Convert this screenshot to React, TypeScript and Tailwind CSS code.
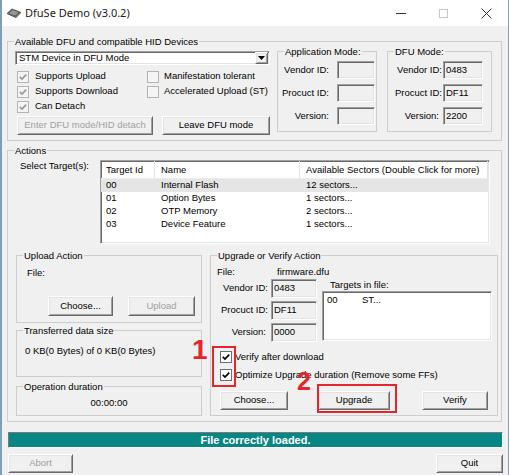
import React from "react";

const raised =
  "border border-t-white border-l-white border-r-[#696969] border-b-[#696969] bg-[#f0f0f0] shadow-[inset_1px_1px_0_#e3e3e3,inset_-1px_-1px_0_#a0a0a0]";
const sunken =
  "border border-t-[#a0a0a0] border-l-[#a0a0a0] border-r-white border-b-white shadow-[inset_1px_1px_0_#696969,inset_-1px_-1px_0_#e3e3e3]";

function Btn({
  children,
  disabled,
  className = "",
}: {
  children: React.ReactNode;
  disabled?: boolean;
  className?: string;
}) {
  return (
    <div
      className={`flex items-center justify-center ${raised} ${
        disabled ? "text-[#a0a0a0]" : "text-black"
      } ${className}`}
    >
      {children}
    </div>
  );
}

function Group({
  title,
  className = "",
  children,
}: {
  title: string;
  className?: string;
  children?: React.ReactNode;
}) {
  return (
    <fieldset className={`min-w-0 border border-[#cdcdcd] ${className}`}>
      <legend className="ml-[6px] px-[1px] leading-[13px]">{title}</legend>
      {children}
    </fieldset>
  );
}

function Check({ checked, dim }: { checked?: boolean; dim?: boolean }) {
  return (
    <span
      className={`flex h-[12px] w-[12px] shrink-0 items-center justify-center ${
        dim ? "border border-[#b4b4b4] bg-[#f4f4f4]" : "border border-[#6e6e6e] bg-white"
      }`}
    >
      {checked && (
        <svg width="10" height="10" viewBox="0 0 10 10">
          <polyline
            points="1.8,4.8 4,7 8.2,2.6"
            fill="none"
            stroke={dim ? "#9a9a9a" : "#000"}
            strokeWidth="1.7"
          />
        </svg>
      )}
    </span>
  );
}

function Field({ value = "", className = "" }: { value?: string; className?: string }) {
  return (
    <div className={`flex items-center pl-[2px] ${sunken} ${className}`}>{value}</div>
  );
}

const targets = [
  { id: "00", name: "Internal Flash", sectors: "12 sectors..." },
  { id: "01", name: "Option Bytes", sectors: "1 sectors..." },
  { id: "02", name: "OTP Memory", sectors: "2 sectors..." },
  { id: "03", name: "Device Feature", sectors: "1 sectors..." },
];

export default function App() {
  return (
    <div className="relative flex h-[475px] w-[509px] flex-col overflow-hidden whitespace-nowrap border-l-2 border-r border-[#7b9fbd] bg-[#f0f0f0] font-['Liberation_Sans',Arial,sans-serif] text-[9.5px] text-black">
      {/* title bar */}
      <div className="flex h-[26px] shrink-0 items-center bg-white">
        <svg className="ml-[4px]" width="16" height="12" viewBox="0 0 16 12">
          <path d="M1 6 L6 1.5 L15 5 L10 10 Z" fill="#5c5c5c" />
          <path d="M3 6.2 L6.5 3 L12.5 5.4 L9.3 8.5 Z" fill="#9a9a9a" />
          <path d="M1 6 L10 10 L10 11 L1 7 Z" fill="#3a3a3a" />
          <path d="M10 10 L15 5 L15 6 L10 11 Z" fill="#444" />
        </svg>
        <span className="ml-[3px] font-['Noto_Sans',sans-serif] text-[11px] text-[#1a1a1a]">
          DfuSe Demo (v3.0.2)
        </span>
        <div className="ml-auto flex h-full items-center">
          <div className="flex h-full w-[43px] items-center justify-center">
            <span className="h-px w-[10px] bg-[#333]" />
          </div>
          <div className="flex h-full w-[43px] items-center justify-center">
            <span className="h-[9px] w-[9px] border border-[#c8c8c8]" />
          </div>
          <div className="flex h-full w-[43px] items-center justify-center">
            <svg width="11" height="11" viewBox="0 0 11 11">
              <path d="M0.5 0.5 L10.5 10.5 M10.5 0.5 L0.5 10.5" stroke="#333" strokeWidth="1" />
            </svg>
          </div>
        </div>
      </div>

      <div className="flex flex-col pl-[5px] pr-[6px]">
        {/* devices */}
        <Group title="Available DFU and compatible HID Devices" className="mt-[9px] h-[106px]">
          <div className="flex items-start pl-[7px]">
            <div className="flex w-[255px] flex-col">
              <div className={`mt-[3px] flex h-[14px] items-center bg-white ${sunken}`}>
                <span className="pl-[3px]">STM Device in DFU Mode</span>
                <span className={`ml-auto mr-px flex h-[12px] w-[13px] items-center justify-center ${raised}`}>
                  <svg width="7" height="4" viewBox="0 0 7 4">
                    <path d="M0 0 H7 L3.5 4 Z" fill="#000" />
                  </svg>
                </span>
              </div>
              <div className="mt-[4px] grid grid-cols-[132px_1fr] auto-rows-[15px] items-center">
                <div className="flex items-center gap-[6px] pl-[2px]">
                  <Check checked dim />
                  Supports Upload
                </div>
                <div className="flex items-center gap-[5px]">
                  <Check dim />
                  Manifestation tolerant
                </div>
                <div className="flex items-center gap-[6px] pl-[2px]">
                  <Check checked dim />
                  Supports Download
                </div>
                <div className="flex items-center gap-[5px]">
                  <Check dim />
                  Accelerated Upload (ST)
                </div>
                <div className="flex items-center gap-[6px] pl-[2px]">
                  <Check checked dim />
                  Can Detach
                </div>
              </div>
              <div className="mt-[2px] flex gap-[9px] pl-[2px]">
                <Btn disabled className="h-[19px] w-[136px]">
                  Enter DFU mode/HID detach
                </Btn>
                <Btn className="h-[19px] w-[108px]">Leave DFU mode</Btn>
              </div>
            </div>

            <Group title="Application Mode:" className="-mt-[3px] ml-[7px] h-[87px] w-[100px]">
              <div className="grid grid-cols-[47px_38px] auto-rows-[18px] items-center gap-x-[8px] gap-y-[5px] pl-[4px] pt-[3px]">
                <span className="text-right">Vendor ID:</span>
                <Field className="h-full" />
                <span className="text-right">Procuct ID:</span>
                <Field className="h-full" />
                <span className="text-right">Version:</span>
                <Field className="h-full" />
              </div>
            </Group>

            <Group title="DFU Mode:" className="-mt-[3px] ml-[10px] h-[87px] w-[105px]">
              <div className="grid grid-cols-[48px_40px] auto-rows-[18px] items-center gap-x-[1px] gap-y-[5px] pl-[6px] pt-[3px]">
                <span className="text-right">Vendor ID:</span>
                <Field className="h-full" value="0483" />
                <span className="text-right">Procuct ID:</span>
                <Field className="h-full" value="DF11" />
                <span className="pr-[3px] text-right">Version:</span>
                <Field className="h-full" value="2200" />
              </div>
            </Group>
          </div>
        </Group>

        {/* actions */}
        <Group title="Actions" className="mt-[3px] h-[278px]">
          <div className="flex items-start">
            <div className="mt-[2px] w-[92px] pl-[12px] leading-[13px]">Select Target(s):</div>
            <div className={`mt-[3px] h-[84px] w-[390px] overflow-hidden bg-white ${sunken}`}>
              <div className="flex h-[18px] items-center border-b border-[#ececec]">
                <div className="flex h-full w-[54px] items-center border-r border-[#e2e2e2] pl-[5px] pt-[2px]">
                  Target Id
                </div>
                <div className="flex h-full w-[145px] items-center border-r border-[#e2e2e2] pl-[6px] pt-[2px]">
                  Name
                </div>
                <div className="flex h-full w-[188px] items-center border-r border-[#e2e2e2] pl-[6px] pt-[2px]">
                  Available Sectors (Double Click for more)
                </div>
              </div>
              {targets.map((t, i) => (
                <div
                  key={t.id}
                  className={`flex h-[13px] items-center ${i === 0 ? "bg-[#e5e5e5]" : ""}`}
                >
                  <span className="w-[54px] pl-[5px]">{t.id}</span>
                  <span className="w-[145px] pl-[6px]">{t.name}</span>
                  <span className="pl-[6px]">{t.sectors}</span>
                </div>
              ))}
            </div>
          </div>

          <div className="mt-[5px] flex items-start pl-[8px]">
            <div className="flex w-[186px] flex-col">
              <Group title="Upload Action" className="h-[74px]">
                <div className="mt-[4px] pl-[10px] leading-[13px]">File:</div>
                <div className="mt-[17px] flex gap-[15px] pl-[31px]">
                  <Btn className="h-[20px] w-[65px]">Choose...</Btn>
                  <Btn disabled className="h-[20px] w-[67px]">
                    Upload
                  </Btn>
                </div>
              </Group>
              <Group title="Transferred data size" className="mt-[1px] h-[53px]">
                <div className="pl-[8px] pt-[7px] leading-[13px]">0 KB(0 Bytes) of 0 KB(0 Bytes)</div>
              </Group>
              <Group title="Operation duration" className="mt-[3px] h-[36px]">
                <div className="pt-[3px] text-center leading-[13px]">00:00:00</div>
              </Group>
            </div>

            <Group title="Upgrade or Verify Action" className="ml-[8px] h-[167px] w-[288px]">
              <div className="flex pl-[6px] pt-[3px] leading-[13px]">
                <span className="w-[60px]">File:</span>
                <span>firmware.dfu</span>
              </div>
              <div className="mt-px flex items-start pl-[7px]">
                <div className="grid grid-cols-[50px_46px] auto-rows-[19px] items-center gap-x-[3px] gap-y-[3px]">
                  <span className="text-right">Vendor ID:</span>
                  <Field className="h-full" value="0483" />
                  <span className="text-right">Procuct ID:</span>
                  <Field className="h-full" value="DF11" />
                  <span className="pr-[2px] text-right">Version:</span>
                  <Field className="h-full" value="0000" />
                </div>
                <div className="ml-[5px] flex w-[170px] flex-col">
                  <span className="h-[12px] pl-[8px] leading-[12px]">Targets in file:</span>
                  <div className={`h-[50px] bg-white ${sunken}`}>
                    <div className="flex pl-[4px] pt-[1px]">
                      <span className="w-[35px]">00</span>
                      <span>ST...</span>
                    </div>
                  </div>
                </div>
              </div>
              <div className="mt-[7px] flex flex-col gap-[2px] pl-[9px]">
                <div className="flex h-[16px] items-center gap-[3px]">
                  <Check checked />
                  Verify after download
                </div>
                <div className="flex h-[16px] items-center gap-[3px]">
                  <Check checked />
                  Optimize Upgrade duration (Remove some FFs)
                </div>
              </div>
              <div className="mt-[8px] flex pl-[9px]">
                <Btn className="h-[19px] w-[68px]">Choose...</Btn>
                <Btn className="ml-[30px] h-[19px] w-[72px]">Upgrade</Btn>
                <Btn className="ml-[32px] h-[19px] w-[66px]">Verify</Btn>
              </div>
            </Group>
          </div>
        </Group>

        {/* status */}
        <div className="-mr-px ml-px mt-[10px] flex h-[16px] items-center justify-center border border-t-[#7a7a7a] border-l-[#7a7a7a] border-r-white border-b-white bg-[#078683] text-[11px] font-bold text-white">
          File correctly loaded.
        </div>

        <div className="-mr-px ml-px mt-[6px] flex justify-between">
          <Btn disabled className="h-[19px] w-[65px]">
            Abort
          </Btn>
          <Btn className="h-[19px] w-[67px]">Quit</Btn>
        </div>
      </div>

      {/* annotations */}
      <div className="absolute left-[210px] top-[346px] h-[41px] w-[24px] border-2 border-[#e3262c]" />
      <div className="absolute left-[315px] top-[384px] h-[29px] w-[80px] border-2 border-[#e3262c]" />
      <span className="absolute left-[190px] top-[336px] text-[28px] font-bold leading-none text-[#e3262c]">
        1
      </span>
      <span className="absolute left-[295px] top-[369px] text-[25px] font-bold leading-none text-[#e3262c]">
        2
      </span>
    </div>
  );
}
